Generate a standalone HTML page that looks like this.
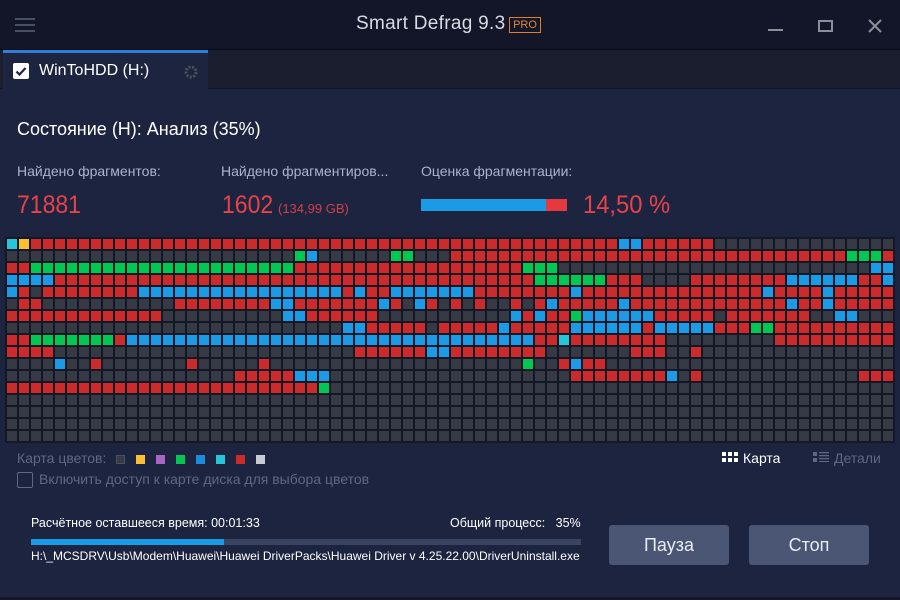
<!DOCTYPE html>
<html><head><meta charset="utf-8"><style>
*{margin:0;padding:0;box-sizing:border-box}
body{width:900px;height:600px;overflow:hidden;background:#1d2440;font-family:"Liberation Sans","DejaVu Sans",sans-serif;position:relative;color:#fff}
.abs{position:absolute;white-space:nowrap}
#title{left:0;top:0;width:900px;height:50px;background:#121628;border-bottom:1px solid #0b0e1a}
#tabs{left:0;top:50px;width:900px;height:39px;background:#1a1e2f;border-bottom:1px solid #121525}
#tab{left:3px;top:50px;width:205px;height:40px;background:#1d2440;border-top:3px solid #2f7fd6}
#grid{left:5px;top:237px;width:890px;height:206px;background:#141826;display:grid;grid-template-columns:repeat(74,12px);grid-auto-rows:12px;padding:1px}
#grid div{border:1px solid #141826}
.r{background:#cc2a2b}.d{background:#353a44}.g{background:#00c853}.b{background:#1b9be6}.c{background:#26c6da}.y{background:#fbc02d}
.btn{top:525px;width:120px;height:40px;background:#4a5674;border-radius:3px;color:#e8ecf4;font-size:18px;text-align:center;line-height:40px}
.sw{display:inline-block;width:9px;height:9px;margin-right:11px;vertical-align:-1px}
</style></head><body>
<div id="title" class="abs"></div>
<div class="abs" style="left:15px;top:18px;width:20px;height:2px;background:#4a5060;box-shadow:0 6px 0 #4a5060,0 12px 0 #4a5060"></div>
<div class="abs" style="left:356px;top:13px;font-size:19px;color:#d8dbe2;letter-spacing:0.3px">Smart Defrag 9.3</div>
<div class="abs" style="left:509px;top:17px;width:32px;height:16px;border:1px solid #d9822b;color:#e08a30;font-size:11px;line-height:14px;text-align:center">PRO</div>
<div class="abs" style="left:768px;top:29px;width:15px;height:2px;background:#8a8f9a"></div>
<div class="abs" style="left:818px;top:20px;width:15px;height:12px;border:2px solid #8a8f9a"></div>
<svg class="abs" style="left:868px;top:19px" width="14" height="14"><path d="M1 1L13 13M13 1L1 13" stroke="#8a8f9a" stroke-width="2"/></svg>
<div id="tabs" class="abs"></div>
<div id="tab" class="abs"></div>
<div class="abs" style="left:13px;top:63px;width:16px;height:16px;background:#fff;border-radius:2px"></div>
<svg class="abs" style="left:13px;top:63px" width="16" height="16"><path d="M3.5 8.5L6.5 11.5L12.5 5" stroke="#1d2440" stroke-width="2.2" fill="none"/></svg>
<div class="abs" style="left:39px;top:62px;font-size:16px;color:#fff">WinToHDD (H:)</div>
<svg class="abs" style="left:183px;top:64px" width="16" height="16"><circle cx="8" cy="8" r="5" fill="none" stroke="#4a5062" stroke-width="3" stroke-dasharray="2 1.5"/></svg>
<div class="abs" style="left:17px;top:119px;font-size:18px;color:#fff">Состояние (H): Анализ (35%)</div>
<div class="abs" style="left:17px;top:163px;font-size:14px;color:#aab4cc">Найдено фрагментов:</div>
<div class="abs" style="left:221px;top:163px;font-size:14px;color:#aab4cc">Найдено фрагментиров...</div>
<div class="abs" style="left:421px;top:163px;font-size:14px;color:#aab4cc">Оценка фрагментации:</div>
<div class="abs" style="left:17px;top:191px;font-size:25px;color:#e8424a;transform:scaleX(0.92);transform-origin:left">71881</div>
<div class="abs" style="left:222px;top:191px;font-size:25px;color:#e8424a"><span style="display:inline-block;transform:scaleX(0.92);transform-origin:left;width:56px">1602</span><span style="font-size:13px;color:#d04048">(134,99 GB)</span></div>
<div class="abs" style="left:421px;top:199px;width:125px;height:12px;background:#1b9be6"></div>
<div class="abs" style="left:546px;top:199px;width:21px;height:12px;background:#e5383f"></div>
<div class="abs" style="left:583px;top:191px;font-size:25px;color:#e8424a;transform:scaleX(0.95);transform-origin:left">14,50 %</div>
<div id="grid" class="abs"></div>
<div class="abs" style="left:17px;top:450px;font-size:14px;color:#5e6882">Карта цветов:
<span style="display:inline-block;width:6px"></span><span class="sw" style="background:#353a44;border:1px solid #4a5060"></span><span class="sw" style="background:#fbc02d"></span><span class="sw" style="background:#ab63c4"></span><span class="sw" style="background:#00c853"></span><span class="sw" style="background:#1b8be0"></span><span class="sw" style="background:#26c6da"></span><span class="sw" style="background:#cc2a2b"></span><span class="sw" style="background:#c8cbd0"></span></div>
<div class="abs" style="left:17px;top:472px;width:16px;height:16px;border:1px solid #5e6882;border-radius:2px"></div>
<div class="abs" style="left:39px;top:471px;font-size:14px;color:#5e6882">Включить доступ к карте диска для выбора цветов</div>
<svg class="abs" style="left:722px;top:452px" width="16" height="10"><g fill="#fff"><rect x="0" y="0" width="4" height="4"/><rect x="6" y="0" width="4" height="4"/><rect x="12" y="0" width="4" height="4"/><rect x="0" y="6" width="4" height="4"/><rect x="6" y="6" width="4" height="4"/><rect x="12" y="6" width="4" height="4"/></g></svg>
<div class="abs" style="left:743px;top:450px;font-size:14px;color:#fff">Карта</div>
<svg class="abs" style="left:813px;top:452px" width="16" height="10"><g fill="#5e6882"><rect x="0" y="0" width="4" height="4"/><rect x="0" y="6" width="4" height="4"/><rect x="6" y="0" width="10" height="1.3"/><rect x="6" y="3" width="10" height="1.3"/><rect x="6" y="6" width="10" height="1.3"/><rect x="6" y="9" width="10" height="1.3"/></g></svg>
<div class="abs" style="left:834px;top:450px;font-size:14px;color:#5e6882">Детали</div>
<div class="abs" style="left:31px;top:516px;font-size:12.5px;color:#fff">Расчётное оставшееся время: 00:01:33</div>
<div class="abs" style="left:450px;top:516px;font-size:12.5px;color:#fff">Общий процесс:&nbsp;&nbsp; 35%</div>
<div class="abs" style="left:31px;top:539px;width:550px;height:6px;background:#3a4460"></div>
<div class="abs" style="left:31px;top:539px;width:193px;height:6px;background:#1b9be6"></div>
<div class="abs" style="left:31px;top:549px;width:551px;overflow:hidden;font-size:12px;color:#fff">H:\_MCSDRV\Usb\Modem\Huawei\Huawei DriverPacks\Huawei Driver v 4.25.22.00\DriverUninstall.exe</div>
<div class="abs btn" style="left:609px">Пауза</div>
<div class="abs btn" style="left:749px">Стоп</div>
<div class="abs" style="left:0;top:597px;width:900px;height:3px;background:#121628"></div>
<script>
function rep(c,n){return c.repeat(n)}
var rows=[
"cy"+rep("r",23)+rep("r",24)+"rrbb"+rep("r",6)+rep("d",15),
rep("d",24)+"g"+"b"+rep("d",6)+"gg"+"ddd"+rep("r",12)+rep("r",21)+"ggg"+"r",
"rr"+rep("g",22)+"r"+rep("r",18)+"ggg"+"ddd"+rep("d",23)+"bb",
"bbbb"+rep("r",21)+rep("r",19)+rep("g",5)+"grrr"+"dddd"+rep("r",8)+rep("b",6)+"rrb",
"brd"+rep("r",8)+rep("b",14)+"bbb"+"r"+"b"+"rr"+rep("b",7)+rep("r",8)+"br"+rep("r",14)+"b"+"rrrr"+"b"+rep("r",5),
"drr"+rep("d",11)+rep("r",8)+"bbr"+"rrrrrrbrdbrdrdrddrdrbrrr"+"rrb"+rep("r",13)+"brrb"+rep("r",5),
rep("r",13)+rep("d",10)+"bb"+rep("r",6)+rep("d",11)+"brbrrgb"+rep("b",5)+rep("r",5)+"d"+rep("r",7)+"ddbbddd",
rep("d",25)+"dddbb"+rep("r",5)+"d"+rep("r",5)+"b"+rep("r",5)+"bb"+"bbbbrbbbbbrrrgg"+rep("r",10),
"rr"+rep("g",7)+"r"+rep("b",15)+rep("b",19)+"rrcrr"+rep("r",6)+rep("d",9)+rep("r",10),
rep("r",4)+rep("d",21)+"dddd"+rep("r",6)+"bb"+rep("r",8)+"dddd"+"dddrrrddr"+rep("d",16),
"ddddbddr"+rep("d",7)+"r"+rep("d",5)+"rddd"+rep("d",18)+"gddrbr"+"r"+rep("d",24),
rep("d",19)+rep("r",5)+"b"+"bb"+rep("d",20)+"rr"+rep("r",6)+"bdr"+rep("d",13)+"rrr",
rep("r",25)+"rg"+rep("d",22)+rep("d",25)
];
for(var i=0;i<4;i++)rows.push(rep("d",74));
var g=document.getElementById("grid"),h="";
rows.forEach(function(r){for(var j=0;j<74;j++){h+='<div class="'+(r[j]||"d")+'"></div>';}});
g.innerHTML=h;
</script>
</body></html>
